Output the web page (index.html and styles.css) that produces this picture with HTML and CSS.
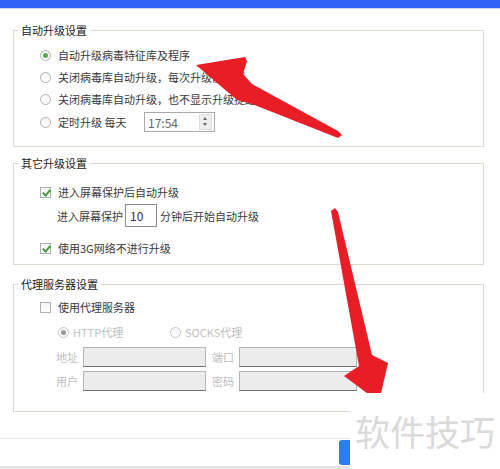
FILE: index.html
```html
<!DOCTYPE html>
<html>
<head>
<title>升级设置</title>
<link rel="stylesheet" href="styles.css">
</head>
<body>
<div class="topbar"></div>

<div class="panel">
  <fieldset class="group group-auto">
    <legend>自动升级设置</legend>
    <div class="body">
      <div class="row"><span class="radio on"></span>自动升级病毒特征库及程序</div>
      <div class="row"><span class="radio"></span>关闭病毒库自动升级，每次升级前提醒</div>
      <div class="row"><span class="radio"></span>关闭病毒库自动升级，也不显示升级提醒</div>
      <div class="row row-time">
        <span class="radio"></span>
        <span class="time-label">定时升级 每天</span>
        <span class="spin">
          <span class="spin-val">17:54</span>
          <span class="spin-btns"><i class="up"></i><i class="down"></i></span>
        </span>
      </div>
    </div>
  </fieldset>

  <fieldset class="group group-other">
    <legend>其它升级设置</legend>
    <div class="body">
      <div class="row"><span class="check on"></span>进入屏幕保护后自动升级</div>
      <div class="row row-saver">进入屏幕保护<span class="num">10</span>分钟后开始自动升级</div>
      <div class="row row-3g"><span class="check on"></span>使用3G网络不进行升级</div>
    </div>
  </fieldset>

  <fieldset class="group group-proxy">
    <legend>代理服务器设置</legend>
    <div class="body">
      <div class="row"><span class="check"></span>使用代理服务器</div>
      <div class="row row-type disabled">
        <span class="opt"><span class="radio on"></span>HTTP代理</span>
        <span class="opt"><span class="radio"></span>SOCKS代理</span>
      </div>
      <div class="field-row disabled">
        <span class="lbl">地址</span><span class="field wide"></span>
        <span class="lbl">端口</span><span class="field"></span>
      </div>
      <div class="field-row disabled">
        <span class="lbl">用户</span><span class="field wide"></span>
        <span class="lbl">密码</span><span class="field"></span>
      </div>
    </div>
  </fieldset>
</div>

<div class="footer"><span class="btn-blue"></span></div>
<div class="bottom-strip"></div>

<!-- annotation arrows drawn over the screenshot -->
<svg class="marks" width="500" height="469" viewBox="0 0 500 469">
  <polygon fill="#e81d25" points="196,65 245,57 247,61 243,74 252,84 338,131 342,135 338,138 252,104 237,100"/>
  <polygon fill="#e81d25" points="331,211 335,208 338,212 372,355 388,363 379,402 344,376 359,366"/>
</svg>

<div class="watermark">软件技巧</div>
</body>
</html>
```

FILE: styles.css
```css
body {
  margin: 0;
  background: #fff;
  font-family: "Noto Sans CJK SC", "Noto Sans", sans-serif;
  font-size: 11px;
  color: #3a3a3a;
  width: 500px;
  height: 469px;
  overflow: hidden;
  position: relative;
}

.topbar {
  height: 8px;
  background-color: #2f63f5;
  border-bottom: 1px solid #c9d8fb;
}

.panel {
  padding: 13px 16px 0 13px;
}

.group {
  margin: 0;
  padding: 0;
  border: 1px solid #dcd9cf;
  min-width: 0;
}

.group legend {
  margin-left: 4px;
  padding: 0 3px;
  line-height: 16px;
  color: #222;
}

.group-other {
  margin-top: 8px;
}

.group-proxy {
  margin-top: 11px;
}

.group-auto .body {
  padding: 6px 0 12px 26px;
}

.group-other .body {
  padding: 10px 0 5px 26px;
}

.group-proxy .body {
  padding: 4px 0 20px 26px;
}

.row {
  display: flex;
  align-items: center;
  height: 22px;
  white-space: nowrap;
}

.radio,
.check {
  flex: none;
  width: 11px;
  height: 11px;
  margin-right: 7px;
  border: 1px solid #b0b0b0;
  box-sizing: border-box;
  background: linear-gradient(#f4f4f4, #fff);
  position: relative;
}

.radio {
  border-radius: 50%;
}

.radio.on::after {
  content: "";
  position: absolute;
  left: 2px;
  top: 2px;
  width: 5px;
  height: 5px;
  border-radius: 50%;
  background: #4cb04c;
}

.check.on::after {
  content: "";
  position: absolute;
  left: 3px;
  top: 0px;
  width: 3px;
  height: 6px;
  border-right: 2px solid #3f9e3f;
  border-bottom: 2px solid #3f9e3f;
  transform: rotate(40deg);
}

.row-time {
  height: 24px;
}

.time-label {
  width: 86px;
}

.spin {
  display: flex;
  align-items: center;
  width: 71px;
  height: 20px;
  box-sizing: border-box;
  border: 1px solid #a9a9a9;
  color: #666;
  font-size: 12px;
}

.spin-val {
  flex: 1;
  padding-left: 3px;
}

.spin-btns {
  display: flex;
  flex-direction: column;
  width: 13px;
  height: 16px;
  margin-right: 2px;
  background: #eee;
  border: 1px solid #ddd;
  box-sizing: border-box;
}

.spin-btns i {
  flex: 1;
  position: relative;
}

.spin-btns i::after {
  content: "";
  position: absolute;
  left: 3px;
  top: 2px;
  border-left: 2.5px solid transparent;
  border-right: 2.5px solid transparent;
}

.spin-btns .up::after {
  border-bottom: 3px solid #666;
}

.spin-btns .down::after {
  top: 1px;
  border-top: 3px solid #666;
}

.row-saver {
  height: 25px;
  padding-left: 17px;
}

.num {
  width: 32px;
  height: 23px;
  box-sizing: border-box;
  margin: 0 3px 0 2px;
  padding-left: 4px;
  border: 1px solid #8c8c8c;
  line-height: 21px;
  font-size: 12px;
  color: #333;
}

.row-3g {
  margin-top: 9px;
}

.disabled {
  color: #c0c0c0;
}

.row-type {
  margin-top: 3px;
  padding-left: 18px;
}

.opt {
  display: flex;
  align-items: center;
  width: 112px;
}

.opt .radio {
  margin-right: 4px;
  border-color: #c8c8c8;
}

.opt .radio.on::after {
  background: #9a9a9a;
}

.field-row {
  display: flex;
  align-items: center;
  height: 20px;
  margin-top: 4px;
  padding-left: 16px;
}

.lbl {
  width: 22px;
  margin-right: 5px;
}

.field {
  width: 118px;
  height: 20px;
  box-sizing: border-box;
  background: #ececec;
  border: 1px solid #b4b4b4;
  border-bottom-color: #707070;
}

.field.wide {
  width: 123px;
  margin-right: 6px;
}

.footer {
  margin-top: 26px;
  border-top: 1px solid #e6e6e6;
  padding-top: 1px;
  display: flex;
  justify-content: flex-end;
  padding-right: 91px;
}

.btn-blue {
  width: 70px;
  height: 25px;
  border-radius: 3px;
  background: #2d7cf6;
}

.bottom-strip {
  margin-top: 1px;
  height: 4px;
  background: #e4e4e4;
}

.marks {
  position: absolute;
  left: 0;
  top: 0;
  pointer-events: none;
}

.watermark {
  position: absolute;
  left: 350px;
  top: 393px;
  width: 150px;
  height: 76px;
  background: #fff;
  padding-left: 5px;
  box-sizing: border-box;
  font-size: 35px;
  line-height: 76px;
  color: #dadada;
}
```
